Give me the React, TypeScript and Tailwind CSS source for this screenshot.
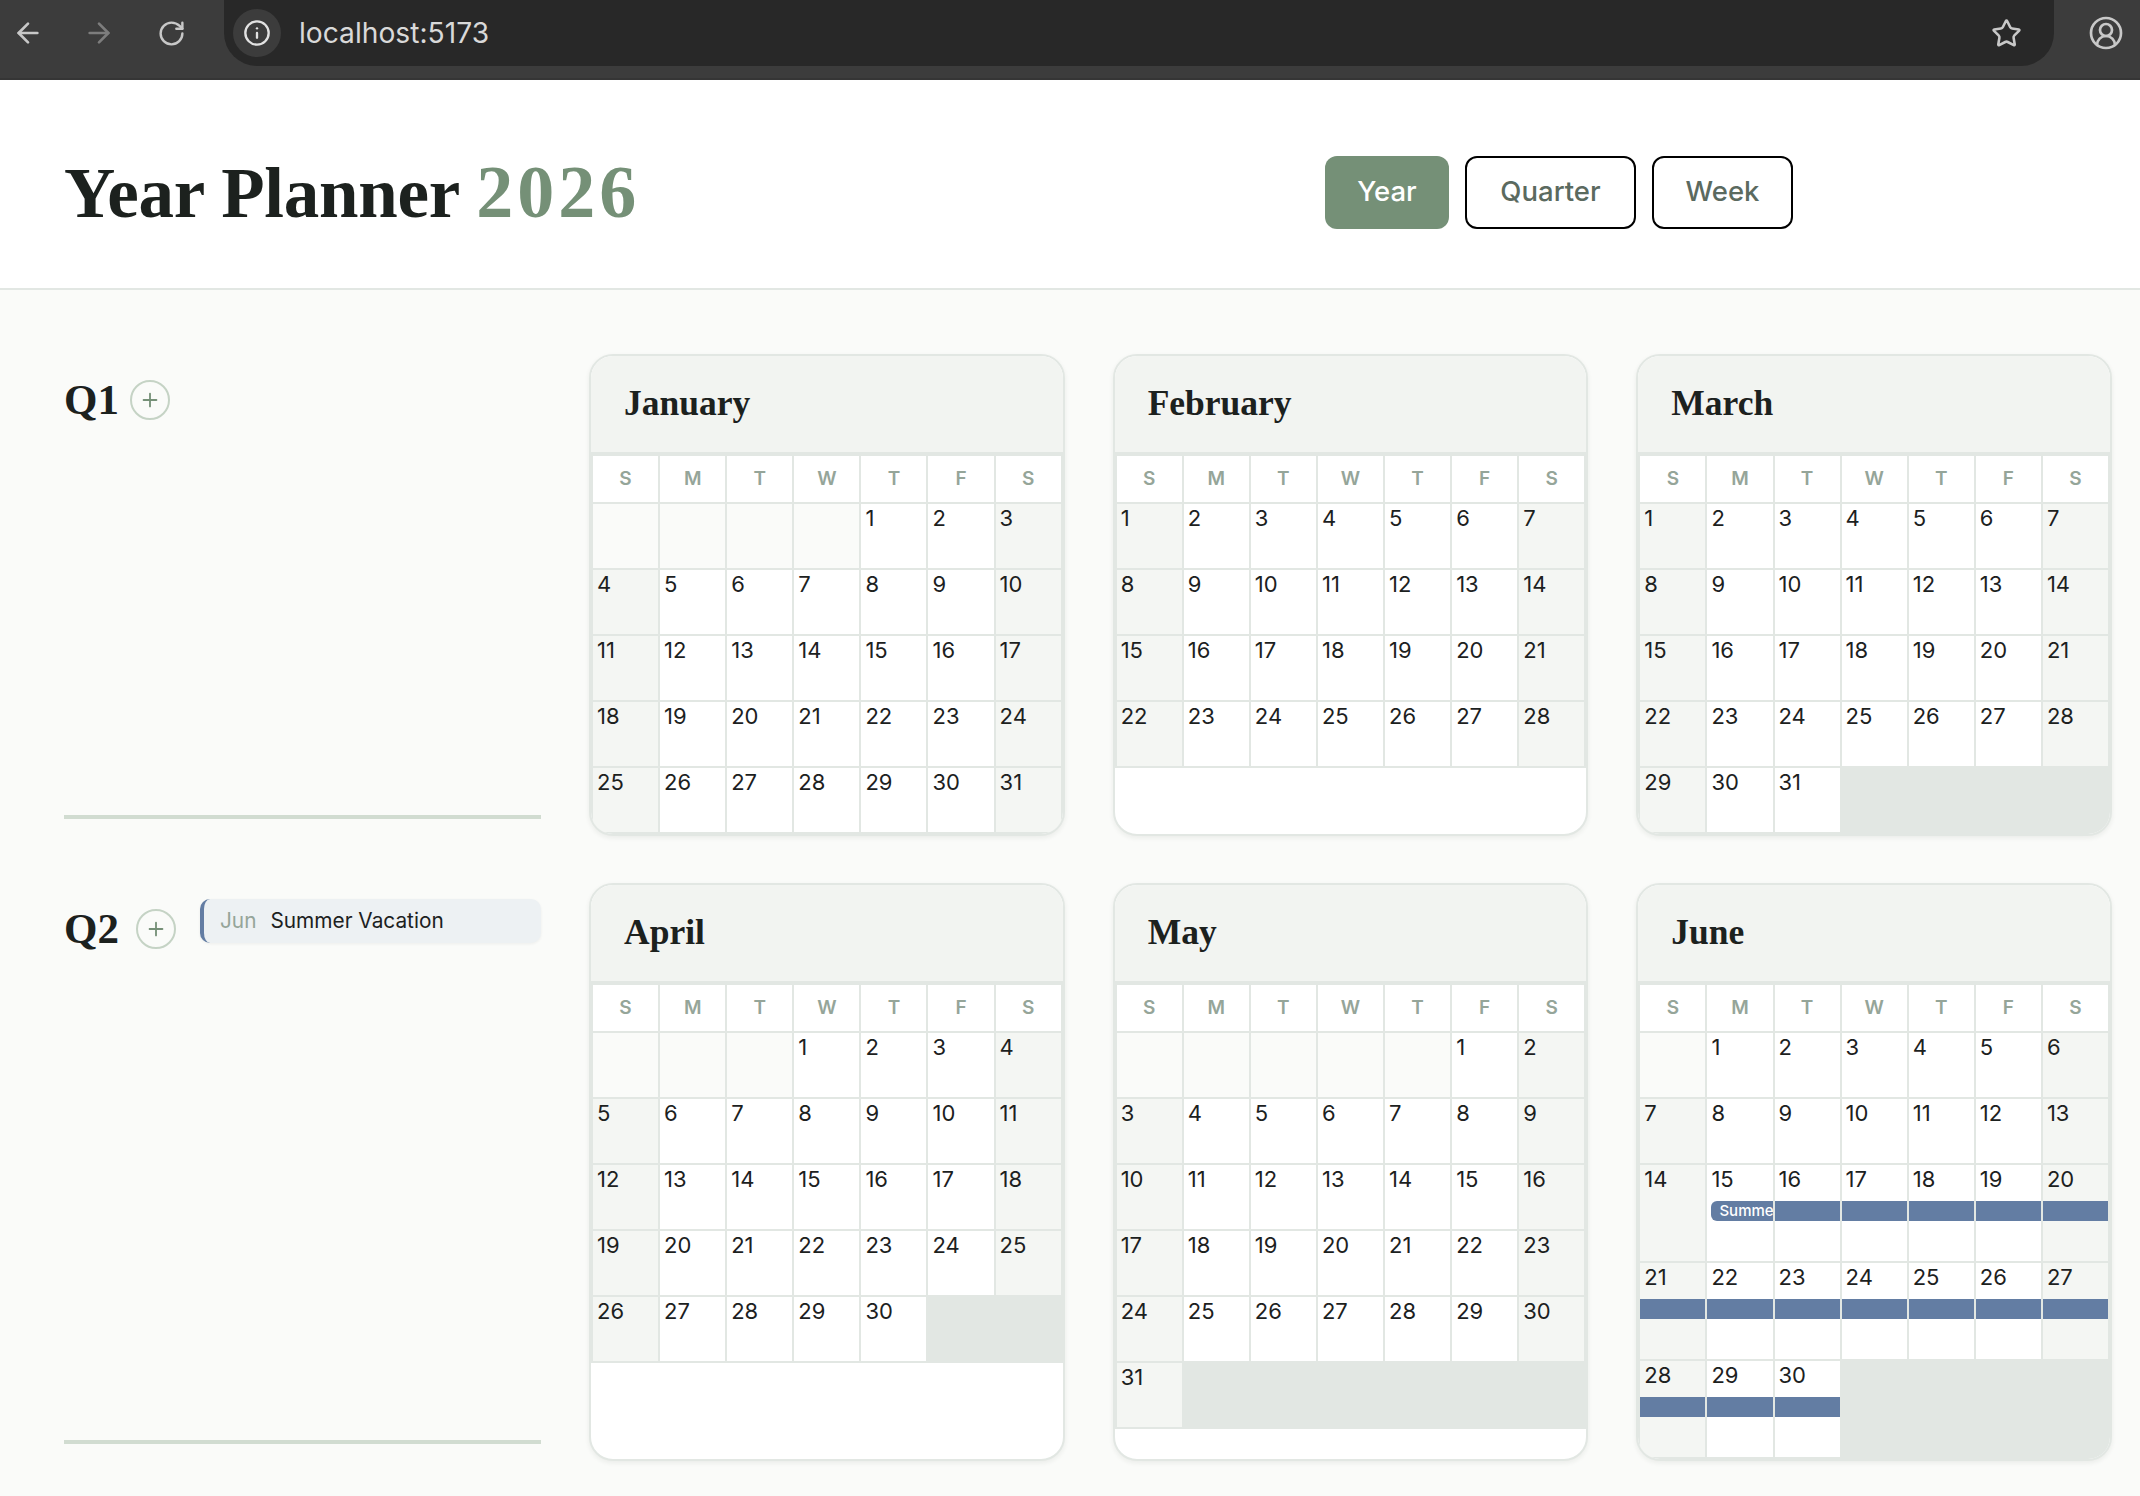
import { ArrowLeft, ArrowRight, CircleUserRound, Info, Plus, RotateCw, Star } from 'lucide-react'

interface Month {
  name: string
  offset: number
  days: number
  event?: { from: number; label: string }
}

const quarters: { label: string; labelWidth: string; months: Month[]; note?: { month: string; title: string } }[] = [
  {
    label: 'Q1',
    labelWidth: 'w-[66px]',
    months: [
      { name: 'January', offset: 4, days: 31 },
      { name: 'February', offset: 0, days: 28 },
      { name: 'March', offset: 0, days: 31 },
    ],
  },
  {
    label: 'Q2',
    labelWidth: 'w-[72px]',
    note: { month: 'Jun', title: 'Summer Vacation' },
    months: [
      { name: 'April', offset: 3, days: 30 },
      { name: 'May', offset: 5, days: 31 },
      { name: 'June', offset: 1, days: 30, event: { from: 15, label: 'Summer Vacation' } },
    ],
  },
]

const weekdays = ['S', 'M', 'T', 'W', 'T', 'F', 'S']

const BrowserBar = () => (
  <div className="flex h-[80px] items-start border-b-2 border-[#353535] bg-[#3c3c3c] text-[#c8c8c8]">
    <div className="flex h-[66px] w-[224px] shrink-0 items-center pl-[12px]">
      <ArrowLeft size={32} strokeWidth={2} />
      <ArrowRight size={32} strokeWidth={2} className="ml-[39px] text-[#7d7d7d]" />
      <RotateCw size={29} strokeWidth={2} className="ml-[42px]" />
    </div>
    <div className="flex h-[66px] flex-1 items-center rounded-b-[33px] bg-[#282828] pl-[9px] pr-[32px]">
      <div className="flex h-[48px] w-[48px] items-center justify-center rounded-full bg-[#3c3c3c]">
        <Info size={28} strokeWidth={2} className="text-[#e2e2e2]" />
      </div>
      <span className="ml-[18px] text-[28.2px] text-[#d9d9d9]">localhost:5173</span>
      <Star size={31} strokeWidth={2} className="ml-auto" />
    </div>
    <div className="flex h-[66px] w-[86px] shrink-0 items-center justify-end pr-[16px]">
      <CircleUserRound size={36} strokeWidth={1.8} />
    </div>
  </div>
)

const Header = () => (
  <header className="flex h-[210px] items-center border-b-2 border-[#e2e7e3] bg-white pl-[64px] pt-[16px]">
    <h1 className="w-[1261px] font-['Liberation_Serif',serif] text-[71px] font-bold leading-none tracking-[-0.25px] text-[#1c211e]">
      Year Planner <span className="text-[74px] tracking-[4px] text-[#759077]">2026</span>
    </h1>
    <div className="flex gap-[16px] text-[27.5px] font-medium">
      <button type="button" className="h-[73px] w-[124px] rounded-[12px] bg-[#759077] text-white">
        Year
      </button>
      <button type="button" className="h-[73px] w-[171px] rounded-[12px] border-2 border-black bg-white text-[#5b6a5f]">
        Quarter
      </button>
      <button type="button" className="h-[73px] w-[141px] rounded-[12px] border-2 border-black bg-white text-[#5b6a5f]">
        Week
      </button>
    </div>
  </header>
)

const MonthCard = ({ month }: { month: Month }) => {
  const cells = [...Array(month.offset).fill(0), ...Array.from({ length: month.days }, (_, i) => i + 1)]
  return (
    <div className="overflow-hidden rounded-[24px] border-2 border-[#e2e7e3] bg-white shadow-[0_2px_5px_rgba(30,40,30,0.07)]">
      <div className="flex h-[98px] items-center border-b-2 border-[#e2e7e3] bg-[#f2f4f1] pl-[33px] font-['Liberation_Serif',serif] text-[35.5px] font-bold text-[#1c211e]">
        {month.name}
      </div>
      <div className="grid grid-cols-7 gap-[2px] bg-[#e2e7e3] p-[2px]">
        {weekdays.map((d, i) => (
          <div key={i} className="flex h-[46px] items-center justify-center bg-white text-[19px] font-semibold text-[#95a599]">
            {d}
          </div>
        ))}
        {cells.map((day, i) => {
          const weekend = i % 7 === 0 || i % 7 === 6
          const hasEvent = month.event && day >= month.event.from
          const isStart = month.event && day === month.event.from
          let bg = weekend ? 'bg-[#f4f6f3]' : 'bg-white'
          if (day === 0) bg = 'bg-[#fafbf9]'
          return (
            <div key={i} className={`${bg} ${hasEvent ? 'min-h-[96px]' : 'min-h-[64px]'} overflow-hidden`}>
              {day > 0 && <div className="pl-[4px] text-[22px] leading-[28px] text-[#1c211e]">{day}</div>}
              {hasEvent && (
                <div
                  className={`mt-[8px] h-[20px] overflow-hidden whitespace-nowrap bg-[#637da3] text-[15px] font-medium leading-[19px] text-white ${
                    isStart ? 'ml-[4px] rounded-l-[6px] pl-[8px]' : ''
                  }`}
                >
                  {isStart ? month.event?.label : ''}
                </div>
              )}
            </div>
          )
        })}
      </div>
    </div>
  )
}

export default function App() {
  return (
    <div className="h-screen overflow-hidden bg-[#fafbf9] font-['Inter',sans-serif]">
      <BrowserBar />
      <Header />
      <main className="flex flex-col gap-[47px] pl-[64px] pr-[28px] pt-[64px]">
        {quarters.map((q) => (
          <section key={q.label} className="grid grid-cols-[477px_1fr] gap-[48px]">
            <div className="flex flex-col justify-between pb-[17px]">
              <div className="flex items-start">
                <div className="mt-[26px] flex items-center">
                  <h2 className={`${q.labelWidth} font-['Liberation_Serif',serif] text-[43px] font-bold leading-[40px] text-[#1c211e]`}>{q.label}</h2>
                  <button type="button" className="flex h-[40px] w-[40px] items-center justify-center rounded-full border-2 border-[#c5d3c5] text-[#759077]">
                    <Plus size={22} strokeWidth={2} />
                  </button>
                </div>
                {q.note && (
                  <div className="ml-[24px] mt-[16px] flex h-[44px] flex-1 items-center rounded-[10px] border-l-4 border-[#637da3] bg-[#edf1f3] pl-[16px] text-[20.8px] shadow-[0_1px_3px_rgba(30,40,30,0.06)]">
                    <span className="text-[#95a599]">{q.note.month}</span>
                    <span className="ml-[14px] text-[#1c211e]">{q.note.title}</span>
                  </div>
                )}
              </div>
              <div className="h-[4px] bg-[#d1dcd1]" />
            </div>
            <div className="grid grid-cols-3 gap-[48px]">
              {q.months.map((m) => (
                <MonthCard key={m.name} month={m} />
              ))}
            </div>
          </section>
        ))}
      </main>
    </div>
  )
}
